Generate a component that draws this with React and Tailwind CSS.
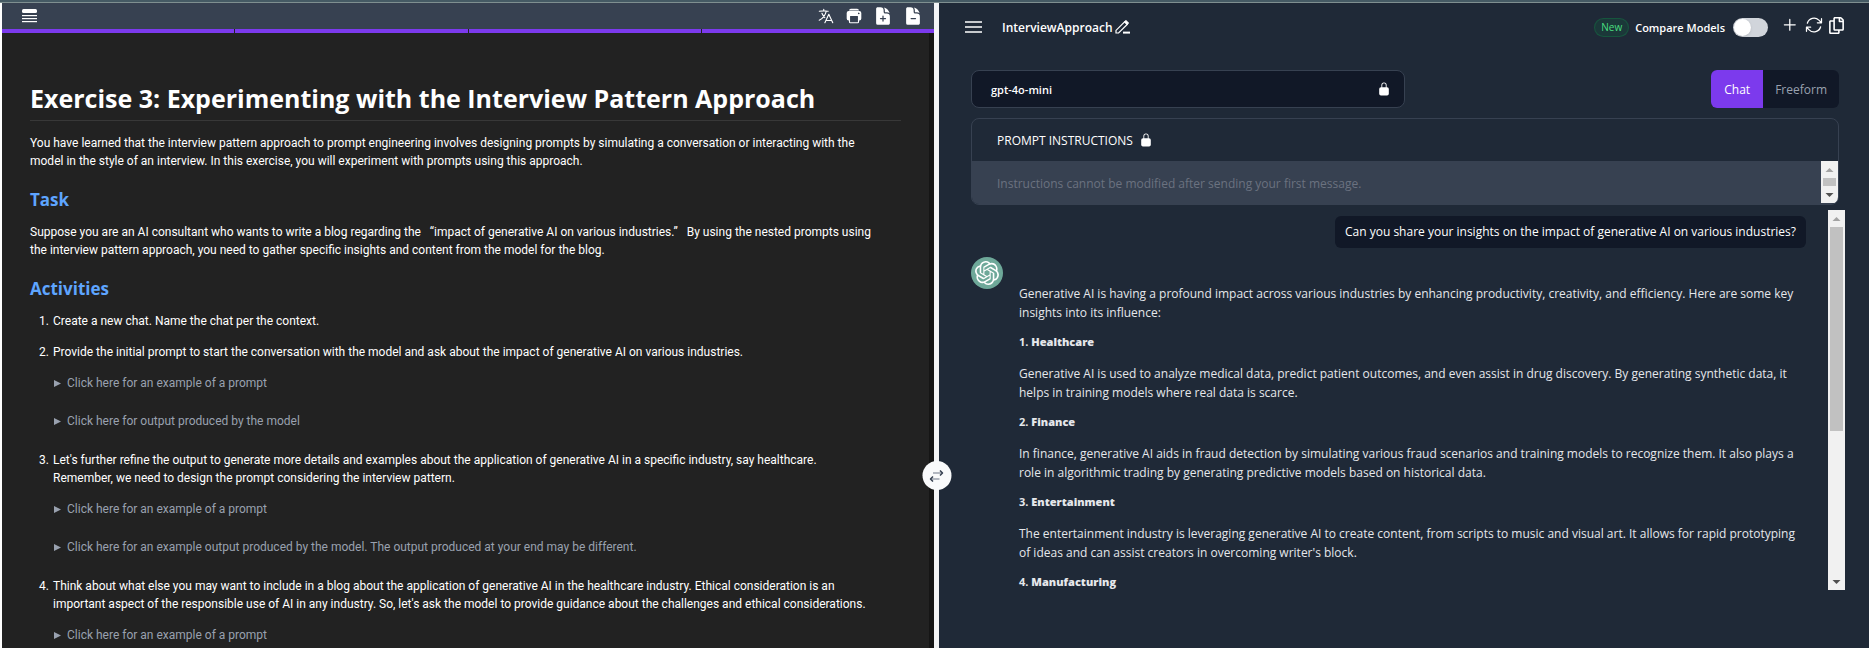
import React from "react";
import { HiDocumentPlus, HiDocumentMinus, HiOutlineLanguage, HiOutlineArrowPath } from "react-icons/hi2";
import { IoPrint, IoLockClosed } from "react-icons/io5";
import { FaRegCopy } from "react-icons/fa";
import { GoPlus } from "react-icons/go";
import { SiOpenai } from "react-icons/si";

function IconButton({ label, children }) {
  return (
    <button type="button" aria-label={label} className="flex items-center justify-center text-white">
      {children}
    </button>
  );
}

function Hint({ children }) {
  return (
    <details className="mb-5 pl-px text-gray-400">
      <summary className="flex cursor-pointer list-none items-center gap-1.5">
        <svg viewBox="0 0 7 7" className="size-[7px] fill-current" aria-hidden="true">
          <path d="M0 0 7 3.5 0 7z" />
        </svg>
        {children}
      </summary>
    </details>
  );
}

function Step({ number, children, hints = [] }) {
  return (
    <li className="flex gap-1">
      <span className="w-[19px] shrink-0 text-right">{number}.</span>
      <div className="min-w-0">
        <p className="mb-[13px]">{children}</p>
        {hints.length > 0 && (
          <div className="pb-px">
            {hints.map((hint) => (
              <Hint key={hint}>{hint}</Hint>
            ))}
          </div>
        )}
      </div>
    </li>
  );
}

function Arrow({ up }) {
  return (
    <svg viewBox="0 0 17 17" className="h-[17px] w-[17px] shrink-0" aria-hidden="true">
      {up ? <path d="M8.5 7 12.5 11h-8z" fill="#a3a3a3" /> : <path d="M8.5 11 12.5 7h-8z" fill="#505050" />}
    </svg>
  );
}

function Exercise() {
  return (
    <section className="ml-0.5 flex min-w-0 flex-[932] flex-col bg-[#222222]">
      <header className="flex h-[26px] shrink-0 items-center justify-between bg-[#374151] pr-[11px] pl-5">
        <IconButton label="Contents">
          <svg viewBox="0 0 15 14" className="h-3.5 w-[15px] fill-white">
            <rect width="15" height="4" rx="1.5" />
            <rect y="6" width="15" height="1.2" />
            <rect y="9" width="15" height="1.2" />
            <rect y="12" width="15" height="1.2" />
          </svg>
        </IconButton>
        <div className="flex items-center gap-2.5">
          <IconButton label="Translate"><HiOutlineLanguage className="size-[18px]" /></IconButton>
          <IconButton label="Print"><IoPrint className="size-[18px]" /></IconButton>
          <IconButton label="Increase text size"><HiDocumentPlus className="size-5" /></IconButton>
          <IconButton label="Decrease text size"><HiDocumentMinus className="size-5" /></IconButton>
        </div>
      </header>
      <div className="grid h-1 shrink-0 grid-cols-4 gap-px">
        <span className="bg-[#7c3aed]" />
        <span className="bg-[#7c3aed]" />
        <span className="bg-[#7c3aed]" />
        <span className="bg-[#7c3aed]" />
      </div>
      <div className="min-h-0 flex-1 overflow-hidden border-r-5 border-[#151515] pt-[46px] pr-7 pl-7 font-['Roboto','Open_Sans',sans-serif] text-[12px] leading-[18px] text-white">
        <h1 className="mb-[13px] border-b border-[#383838] pb-[3px] font-['Open_Sans','Noto_Sans',sans-serif] text-[25px] leading-[38px] font-bold">
          Exercise 3: Experimenting with the Interview Pattern Approach
        </h1>
        <p className="mb-[18px]">
          You have learned that the interview pattern approach to prompt engineering involves designing prompts by simulating a conversation or interacting with the
          <br />
          model in the style of an interview. In this exercise, you will experiment with prompts using this approach.
        </p>
        <h2 className="mb-[11px] font-['Open_Sans','Noto_Sans',sans-serif] text-[17px] leading-6 font-bold text-[#5ea5ff]">Task</h2>
        <p className="mb-[18px]">
          Suppose you are an AI consultant who wants to write a blog regarding the &nbsp; “impact of generative AI on various industries.” &nbsp; By using the nested prompts using
          <br />
          the interview pattern approach, you need to gather specific insights and content from the model for the blog.
        </p>
        <h2 className="mb-[11px] font-['Open_Sans','Noto_Sans',sans-serif] text-[17px] leading-6 font-bold text-[#5ea5ff]">Activities</h2>
        <ol>
          <Step number={1}>Create a new chat. Name the chat per the context.</Step>
          <Step
            number={2}
            hints={["Click here for an example of a prompt", "Click here for output produced by the model"]}
          >
            Provide the initial prompt to start the conversation with the model and ask about the impact of generative AI on various industries.
          </Step>
          <Step
            number={3}
            hints={[
              "Click here for an example of a prompt",
              "Click here for an example output produced by the model. The output produced at your end may be different.",
            ]}
          >
            Let's further refine the output to generate more details and examples about the application of generative AI in a specific industry, say healthcare.
            <br />
            Remember, we need to design the prompt considering the interview pattern.
          </Step>
          <Step number={4} hints={["Click here for an example of a prompt"]}>
            Think about what else you may want to include in a blog about the application of generative AI in the healthcare industry. Ethical consideration is an
            <br />
            important aspect of the responsible use of AI in any industry. So, let's ask the model to provide guidance about the challenges and ethical considerations.
          </Step>
        </ol>
      </div>
    </section>
  );
}

const answer = [
  ["1. ", "Healthcare", "Generative AI is used to analyze medical data, predict patient outcomes, and even assist in drug discovery. By generating synthetic data, it helps in training models where real data is scarce."],
  ["2. ", "Finance", "In finance, generative AI aids in fraud detection by simulating various fraud scenarios and training models to recognize them. It also plays a role in algorithmic trading by generating predictive models based on historical data."],
  ["3. ", "Entertainment", "The entertainment industry is leveraging generative AI to create content, from scripts to music and visual art. It allows for rapid prototyping of ideas and can assist creators in overcoming writer's block."],
  ["4. ", "Manufacturing", ""],
];

function Chat() {
  return (
    <section className="flex min-w-0 flex-[930] flex-col bg-[#1f2937] pb-[58px] text-[12px] leading-[19px] text-white">
      <header className="flex shrink-0 items-center pt-3 pr-6 pl-[26px]">
        <IconButton label="Open menu">
          <svg viewBox="0 0 17 12" className="h-3 w-[17px] stroke-white" strokeWidth="1.3">
            <path d="M0 1h17M0 6h17M0 11h17" />
          </svg>
        </IconButton>
        <h2 className="ml-5 font-semibold">InterviewApproach</h2>
        <IconButton label="Rename chat">
          <svg viewBox="0 0 15 14" className="ml-0.5 h-3.5 w-[15px] fill-none stroke-white" strokeWidth="1.2">
            <path d="M1 13v-2.600L9.600 1.800l2.600 2.600L3.600 13z" />
            <path d="M9.800 1.800 10.900.7l2.400 2.400-1.100 1.100z" fill="white" />
            <path d="M8 12.600h7" strokeWidth="2" />
          </svg>
        </IconButton>
        <div className="ml-auto flex items-center">
          <span className="rounded-full border border-green-500/20 bg-green-500/10 px-1.5 text-[10px] leading-[17px] font-medium text-[#4ade80]">New</span>
          <label htmlFor="compare" className="ml-1.5 text-[11px] font-semibold">Compare Models</label>
          <span className="relative ml-2 flex">
            <input id="compare" type="checkbox" role="switch" className="peer h-[19px] w-[35px] appearance-none rounded-full bg-[#d1d5db] checked:bg-[#7c3aed]" />
            <span className="pointer-events-none absolute top-px left-px size-[17px] rounded-full bg-white shadow-sm peer-checked:left-[17px]" />
          </span>
          <div className="mb-1 ml-3 flex items-center gap-1">
            <IconButton label="New chat"><GoPlus className="size-5" /></IconButton>
            <IconButton label="Refresh"><HiOutlineArrowPath className="size-5" /></IconButton>
            <IconButton label="Copy chat"><FaRegCopy className="size-[17px]" /></IconButton>
          </div>
        </div>
      </header>
      <div className="mt-[31px] flex h-[38px] shrink-0 justify-between pr-[30px] pl-8">
        <button type="button" className="flex w-1/2 items-center justify-between rounded-lg border border-[#374151] bg-[#111827] pr-[13px] pl-[19px] text-[11px] font-semibold">
          gpt-4o-mini
          <IoLockClosed className="size-3.5" />
        </button>
        <div className="flex overflow-hidden rounded-md bg-[#111827]">
          <button type="button" className="bg-[#7c3aed] px-[13px]">Chat</button>
          <button type="button" className="px-3 text-gray-400">Freeform</button>
        </div>
      </div>
      <div className="mt-2.5 mr-[30px] ml-8 shrink-0 overflow-hidden rounded-lg border border-[#374151]">
        <label htmlFor="instructions" className="flex h-[42px] items-center gap-1.5 pl-[25px]">
          PROMPT INSTRUCTIONS
          <IoLockClosed className="size-3.5" />
        </label>
        <div className="flex h-[43px] bg-[#374151]">
          <textarea
            id="instructions"
            disabled
            className="min-w-0 flex-1 resize-none overflow-hidden pt-[13px] pl-[25px] placeholder:text-[#6b7280]"
            placeholder="Instructions cannot be modified after sending your first message."
          />
          <div className="mb-px flex w-[17px] flex-col bg-[#f1f1f1]">
            <Arrow up />
            <div className="mx-0.5 flex-1 bg-[#c1c1c1]" />
            <Arrow />
          </div>
        </div>
      </div>
      <div className="mt-[5px] mr-6 ml-8 flex min-h-0 flex-1">
        <div className="min-w-0 flex-1 overflow-hidden pt-1.5 pr-[22px]">
          <p className="ml-auto w-fit rounded-md bg-[#111827] px-2.5 py-1.5 leading-5">
            Can you share your insights on the impact of generative AI on various industries?
          </p>
          <div className="mt-[9px] flex gap-4">
            <span className="flex size-8 shrink-0 items-center justify-center rounded-full bg-[#6ea899]">
              <SiOpenai className="size-6" />
            </span>
            <div className="min-w-0 pt-[27px] text-gray-200">
              <p className="mb-[11px]">
                Generative AI is having a profound impact across various industries by enhancing productivity, creativity, and efficiency. Here are some key insights into its influence:
              </p>
              {answer.map(([number, title, text]) => (
                <React.Fragment key={title}>
                  <h3 className="mb-[13px] text-[11px] leading-[18px] font-bold">{number}<strong className="font-extrabold">{title}</strong></h3>
                  {text && <p className="mb-[11px]">{text}</p>}
                </React.Fragment>
              ))}
            </div>
          </div>
        </div>
        <div className="flex w-[17px] shrink-0 flex-col bg-[#f1f1f1]">
          <Arrow up />
          <div className="flex min-h-0 flex-1 flex-col">
            <div className="mx-0.5 h-[59%] bg-[#c1c1c1]" />
          </div>
          <Arrow />
        </div>
      </div>
    </section>
  );
}

export default function App() {
  return (
    <main className="flex h-screen flex-col bg-white font-['Open_Sans','Noto_Sans',sans-serif]">
      <div className="h-[3px] shrink-0 border-b border-[#7f8f90] bg-[#455a64]" />
      <div className="flex min-h-0 flex-1">
        <Exercise />
        <div className="relative w-[5px] shrink-0 bg-[#f3f4f6]">
          <button type="button" aria-label="Resize panels" className="absolute top-[458px] left-1/2 flex size-[29px] -translate-x-1/2 items-center justify-center rounded-full bg-gray-50">
            <svg viewBox="0 0 14 12" className="h-3 w-3.5 fill-none" strokeWidth="1.5">
              <path d="M3.500 3h9M10 9H1.500" stroke="#9ca3af" />
              <path d="M10.500.5 13 3l-2.500 2.500M3.500 6.500 1 9l2.500 2.500" stroke="#374151" />
            </svg>
          </button>
        </div>
        <Chat />
      </div>
    </main>
  );
}
